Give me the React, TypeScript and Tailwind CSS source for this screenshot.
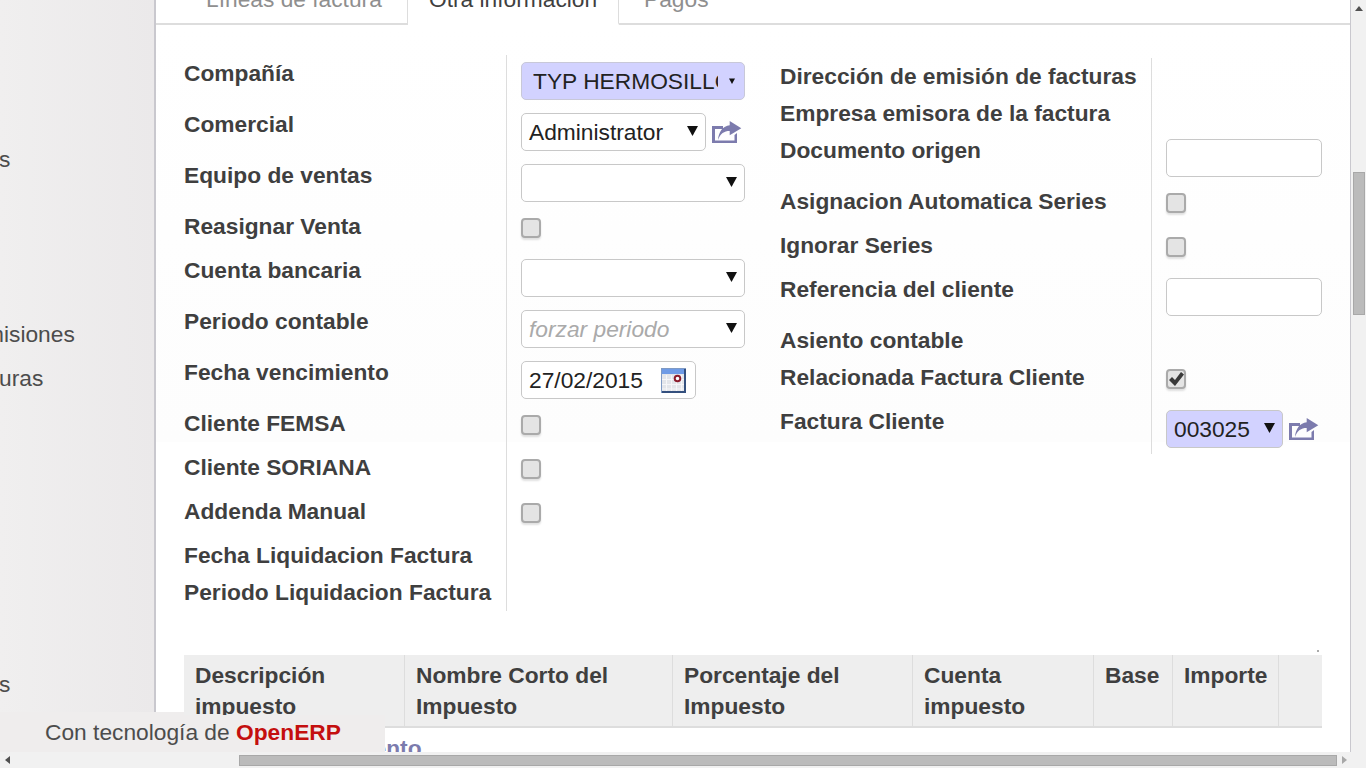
const ROW_HEIGHT = {
  input: "h-[51px]",
  check: "h-[44px]",
  text: "h-[37px]",
};

type RowKind = keyof typeof ROW_HEIGHT;

function Arrow({ small }: { small?: boolean }) {
  return (
    <svg
      viewBox="0 0 12 12"
      className={small ? "w-[6px] h-[6px] shrink-0" : "w-[11px] h-[11px] shrink-0 -mt-[4px]"}
    >
      <polygon points="0,1 12,1 6,12" fill="#111" />
    </svg>
  );
}

function ShareIcon() {
  return (
    <svg viewBox="0 0 30 23" className="w-[30px] h-[23px] shrink-0 ml-[6px] mt-[1px]">
      <path d="M0 5H11V8H3V19.5H22.5V14L25 12V22H0Z" fill="#7c7bad" />
      <path d="M17.7 0L29.3 7.3L17.7 14.3V10C12 10 8.5 12.5 6 19C6.5 11 11 5 17.7 4.3Z" fill="#7c7bad" />
    </svg>
  );
}

function CalendarIcon() {
  return (
    <svg viewBox="0 0 25 25" className="w-[25px] h-[25px] shrink-0">
      <rect x="0.5" y="0.5" width="24" height="24" fill="#e3e5ea" stroke="#7f9ac4" />
      <rect x="1" y="1" width="23" height="5" fill="#6f9be6" />
      <path d="M5.5 7v17M10.5 7v17M15.5 7v17M20.5 7v17M1 11.5h23M1 16.5h23M1 21h23" stroke="#f6f6f8" strokeWidth="1" />
      <path d="M24 1v23H1" fill="none" stroke="#34507e" strokeWidth="2" />
      <circle cx="16.5" cy="10.5" r="2.8" fill="#fff" stroke="#8c1c2c" strokeWidth="2" />
    </svg>
  );
}

function Checkbox({ checked }: { checked?: boolean }) {
  return (
    <div className="w-[20px] h-[20px] rounded-[4px] border-2 border-[#aaaaaa] bg-[#e4e4e4] shadow-[0_2px_2px_rgba(0,0,0,0.12)] flex items-center justify-center">
      {checked && (
        <svg viewBox="0 0 16 16" className="w-[16px] h-[16px]">
          <path d="M1 9l3-3 3 3 6-8 3 2.5-9 11.5z" fill="#3a3a3a" />
        </svg>
      )}
    </div>
  );
}

function SelectBox({
  value,
  width,
  m2o,
  placeholder,
}: {
  value?: string;
  width: string;
  m2o?: boolean;
  placeholder?: boolean;
}) {
  return (
    <div
      className={`${width} h-[38px] rounded-[5px] border border-[#c8c8c8] pl-[7px] pr-[7px] flex items-center justify-between ${
        m2o ? "bg-[#d2d2ff]" : "bg-white"
      }`}
    >
      <span className={placeholder ? "italic text-[#aaaaaa]" : "text-[#222222]"}>{value}</span>
      <Arrow />
    </div>
  );
}

function Row({
  label,
  kind,
  labelWidth,
  children,
}: {
  label: string;
  kind: RowKind;
  labelWidth: string;
  children?: React.ReactNode;
}) {
  return (
    <div className={`flex ${ROW_HEIGHT[kind]}`}>
      <div className={`${labelWidth} h-[37px] flex items-center font-bold text-[#3f3f3f] whitespace-nowrap`}>
        {label}
      </div>
      <div
        className={`flex-1 border-l border-[#dddddd] pl-[14px] ${
          kind === "check" ? "pt-[10px]" : "pt-[7px]"
        }`}
      >
        {children}
      </div>
    </div>
  );
}

function LeftColumn() {
  const labelWidth = "w-[322px]";
  return (
    <div className="w-[561px] shrink-0">
      <Row label="Compañía" kind="input" labelWidth={labelWidth}>
        <div className="w-[224px] h-[38px] rounded-[5px] border border-[#c8c8d8] bg-[#d2d2ff] pl-[11px] pr-[9px] flex items-center">
          <span className="w-[185px] overflow-hidden whitespace-nowrap text-[#222222]">
            TYP HERMOSILLO
          </span>
          <span className="flex-1" />
          <Arrow small />
        </div>
      </Row>
      <Row label="Comercial" kind="input" labelWidth={labelWidth}>
        <div className="flex items-center">
          <SelectBox value="Administrator" width="w-[185px]" />
          <ShareIcon />
        </div>
      </Row>
      <Row label="Equipo de ventas" kind="input" labelWidth={labelWidth}>
        <SelectBox width="w-[224px]" />
      </Row>
      <Row label="Reasignar Venta" kind="check" labelWidth={labelWidth}>
        <Checkbox />
      </Row>
      <Row label="Cuenta bancaria" kind="input" labelWidth={labelWidth}>
        <SelectBox width="w-[224px]" />
      </Row>
      <Row label="Periodo contable" kind="input" labelWidth={labelWidth}>
        <SelectBox value="forzar periodo" width="w-[224px]" placeholder />
      </Row>
      <Row label="Fecha vencimiento" kind="input" labelWidth={labelWidth}>
        <div className="w-[175px] h-[38px] rounded-[5px] border border-[#c8c8c8] bg-white pl-[7px] pr-[9px] flex items-center justify-between">
          <span className="text-[#222222]">27/02/2015</span>
          <CalendarIcon />
        </div>
      </Row>
      <Row label="Cliente FEMSA" kind="check" labelWidth={labelWidth}>
        <Checkbox />
      </Row>
      <Row label="Cliente SORIANA" kind="check" labelWidth={labelWidth}>
        <Checkbox />
      </Row>
      <Row label="Addenda Manual" kind="check" labelWidth={labelWidth}>
        <Checkbox />
      </Row>
      <Row label="Fecha Liquidacion Factura" kind="text" labelWidth={labelWidth} />
      <Row label="Periodo Liquidacion Factura" kind="text" labelWidth={labelWidth} />
    </div>
  );
}

function RightColumn() {
  const labelWidth = "w-[371px]";
  const textInput = "w-[156px] h-[38px] rounded-[5px] border border-[#c8c8c8] bg-white";
  return (
    <div className="flex-1 mt-[3px] ml-[35px]">
      <Row label="Dirección de emisión de facturas" kind="text" labelWidth={labelWidth} />
      <Row label="Empresa emisora de la factura" kind="text" labelWidth={labelWidth} />
      <Row label="Documento origen" kind="input" labelWidth={labelWidth}>
        <div className={textInput} />
      </Row>
      <Row label="Asignacion Automatica Series" kind="check" labelWidth={labelWidth}>
        <Checkbox />
      </Row>
      <Row label="Ignorar Series" kind="check" labelWidth={labelWidth}>
        <Checkbox />
      </Row>
      <Row label="Referencia del cliente" kind="input" labelWidth={labelWidth}>
        <div className={textInput} />
      </Row>
      <Row label="Asiento contable" kind="text" labelWidth={labelWidth} />
      <Row label="Relacionada Factura Cliente" kind="check" labelWidth={labelWidth}>
        <Checkbox checked />
      </Row>
      <Row label="Factura Cliente" kind="input" labelWidth={labelWidth}>
        <div className="flex items-center">
          <SelectBox value="003025" width="w-[117px]" m2o />
          <ShareIcon />
        </div>
      </Row>
    </div>
  );
}

const COLUMNS = [
  { title: "Descripción impuesto", width: "w-[221px]" },
  { title: "Nombre Corto del Impuesto", width: "w-[268px]" },
  { title: "Porcentaje del Impuesto", width: "w-[240px]" },
  { title: "Cuenta impuesto", width: "w-[181px]" },
  { title: "Base", width: "w-[79px]" },
  { title: "Importe", width: "w-[106px]" },
  { title: "", width: "w-[43px]" },
];

function TaxTable() {
  return (
    <div className="mx-[28px]">
      <div className="flex justify-end h-[5px] pr-[3px]">
        <div className="w-[2px] h-[2px] bg-[#aaaaaa]" />
      </div>
      <div className="flex h-[73px] bg-[#eeeeee] border-b-2 border-[#dddddd]">
        {COLUMNS.map((col) => (
          <div
            key={col.title}
            className={`${col.width} shrink-0 border-r border-[#dddddd] last:border-r-0 pl-[11px] pt-[5px] pr-[10px] font-bold text-[#3f3f3f] leading-[31px]`}
          >
            {col.title}
          </div>
        ))}
      </div>
      <div className="pl-[10px] pt-[5px] font-bold text-[#7c7bad] leading-[31px] whitespace-nowrap">
        Agregar un elemento
      </div>
    </div>
  );
}

export default function App() {
  return (
    <div className="relative h-screen w-full overflow-hidden flex flex-col bg-[#f1f1f1] text-[22.75px] font-['Liberation_Sans',Arial,sans-serif]">
      <div className="flex flex-1 min-h-0">
        {/* sidebar, scrolled off to the left */}
        <div className="w-[154px] shrink-0 overflow-hidden bg-gradient-to-r from-[#f0efef] to-[#ebe9ea] text-[#4c4c4c] whitespace-nowrap leading-[26px]">
          <div className="mt-[146px] -ml-[1px]">s</div>
          <div className="mt-[149px] -ml-[15px]">misiones</div>
          <div className="mt-[18px] -ml-[1px]">uras</div>
          <div className="mt-[280px] -ml-[1px]">s</div>
        </div>

        <main className="w-[1197px] shrink-0 border-l-2 border-r border-[#c9c8ce] overflow-hidden bg-[linear-gradient(#ffffff_24px,#fdfdfd_442px,#ffffff_442px)]">
          <div className="flex h-[25px] overflow-hidden">
            <div className="w-[252px] shrink-0 flex items-end border-b-2 border-r border-[#dddddd] pl-[50px] pb-[8px] leading-[31px] text-[#8f8f8f] whitespace-nowrap">
              Líneas de factura
            </div>
            <div className="w-[211px] shrink-0 flex items-end border-b-2 border-b-transparent border-r border-r-[#dddddd] pl-[21px] pb-[8px] leading-[31px] text-[#3f3f3f] whitespace-nowrap">
              Otra información
            </div>
            <div className="flex-1 flex items-end border-b-2 border-[#dddddd] pl-[25px] pb-[8px] leading-[31px] text-[#8f8f8f] whitespace-nowrap">
              Pagos
            </div>
          </div>

          <div className="flex pl-[28px] pt-[30px]">
            <LeftColumn />
            <RightColumn />
          </div>

          <div className="mt-[39px]">
            <TaxTable />
          </div>
        </main>

        {/* vertical scrollbar */}
        <div className="flex-1 flex flex-col items-center">
          <svg viewBox="0 0 8 5" className="w-[8px] h-[5px] mt-[6px]">
            <polygon points="0,5 8,5 4,0" fill="#505050" />
          </svg>
          <div className="w-[12px] h-[143px] mt-[161px] bg-[#bbbbbb] border border-[#a8a8a8]" />
        </div>
      </div>

      {/* horizontal scrollbar */}
      <div className="h-[16px] shrink-0 flex items-center bg-[#f1f1f1]">
        <svg viewBox="0 0 5 8" className="w-[5px] h-[8px] ml-[5px]">
          <polygon points="0,4 5,0 5,8" fill="#505050" />
        </svg>
        <div className="w-[1098px] h-[11px] ml-[229px] bg-[#bbbbbb] border border-[#a8a8a8]" />
        <svg viewBox="0 0 5 8" className="w-[5px] h-[8px] ml-[5px]">
          <polygon points="5,4 0,0 0,8" fill="#a8a8a8" />
        </svg>
      </div>

      <div className="absolute left-0 bottom-[16px] w-[385px] h-[40px] bg-[#efeded] pl-[45px] flex items-center text-[#4c4c4c] whitespace-nowrap [clip-path:polygon(0_0,184px_0,184px_3px,100%_3px,100%_100%,0_100%)]">
        Con tecnología de&nbsp;<span className="font-bold text-[#c40f0f]">OpenERP</span>
      </div>
    </div>
  );
}
